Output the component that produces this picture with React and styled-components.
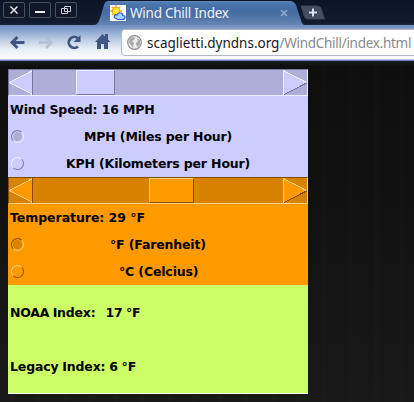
import React from "react";
import styled, { createGlobalStyle } from "styled-components";

const Global = createGlobalStyle`
  * { box-sizing: border-box; }
  body { margin: 0; background: #101010; overflow: hidden; }
`;

const Browser = styled.div`
  width: 414px;
  height: 402px;
  display: flex;
  flex-direction: column;
  overflow: hidden;
`;

const TabStrip = styled.header`
  height: 25px;
  flex: none;
  display: flex;
  background: linear-gradient(#0c1526, #101b30 23px, #1c2a44);
`;

const WindowButtons = styled.div`
  display: flex;
  gap: 4px;
  padding: 2px 0 0 3px;
  width: 95px;
`;

const WindowButton = styled.button`
  width: 22px;
  height: 16px;
  padding: 0;
  border: 1px solid #4a515e;
  border-radius: 2px;
  background: #101828;
  display: flex;
`;

const Tab = styled.div`
  width: 210px;
  height: 25px;
  display: flex;
  align-items: center;
  padding: 1px 17px 0 15px;
  clip-path: path("M0 25 C3 24 4 21 5 18 L9 5 Q10 1 14 1 L195 1 Q199 1 201 5 L206 20 Q207 25 210 25 Z");
  background: linear-gradient(#6b93c8 0, #4d77ae 3px, #456ca2 10px, #4d71a4 16px, #6685b4 25px);
`;

const TabTitle = styled.span`
  flex: 1;
  margin-left: 4px;
  font: 13.5px/20px "Noto Sans", sans-serif;
  letter-spacing: -0.25px;
  color: #eef3fa;
  white-space: nowrap;
`;

const NewTab = styled.button`
  width: 26px;
  height: 16px;
  margin: 5px 0 0 -5px;
  padding: 0;
  border: 0;
  background: none;
`;

const Toolbar = styled.nav`
  height: 36px;
  flex: none;
  display: flex;
  align-items: flex-start;
  padding-left: 8px;
  background: linear-gradient(#6d8dbd 0, #8ca7cf 6px, #bdcde3 15px, #e9eef5 24px, #fdfdfe 34px, #7484c4 35px);
`;

const ToolIcon = styled.span`
  width: 28px;
  height: 34px;
  flex: none;
  svg { display: block; }
`;

const Address = styled.div`
  flex: none;
  width: 310px;
  height: 27px;
  margin: 4px 0 0 1px;
  display: flex;
  align-items: center;
  padding-left: 5px;
  border: 1px solid #b4bac5;
  border-radius: 4px;
  background: #fff;
`;

const Url = styled.span`
  margin-left: 5px;
  font: 13.5px/24px "Noto Sans", sans-serif;
  letter-spacing: 0;
  color: #16181c;
  white-space: nowrap;
`;

const UrlPath = styled.span`
  color: #88898b;
  letter-spacing: -0.28px;
`;

const Page = styled.main`
  flex: 1;
  padding: 8px;
  background:
    linear-gradient(#171d1a, transparent 5px),
    repeating-linear-gradient(90deg, transparent 0 9px, rgba(255,255,255,.008) 12px, transparent 17px 26px),
    linear-gradient(#0d0e0d, #121212 50%, #191919);
`;

const Applet = styled.div`
  width: 300px;
  height: 325px;
  display: flex;
  flex-direction: column;
  border-bottom: 1px solid #fff;
`;

const Group = styled.section`
  height: 108px;
  background: ${(p) => p.$bg};
`;

const ScrollTrack = styled.div`
  height: 27px;
  display: flex;
  justify-content: space-between;
  background: ${(p) => p.$c.track};
  border: 1px solid ${(p) => p.$c.dark};
  border-right-color: ${(p) => p.$c.light};
  border-bottom-color: ${(p) => p.$c.light};
`;

const Arrow = styled.svg`
  display: block;
  flex: none;
`;

const Thumb = styled.div`
  width: ${(p) => p.$w}px;
  height: 25px;
  margin-left: ${(p) => p.$x}px;
  margin-right: auto;
  background: ${(p) => p.$c.bg};
  border: 1px solid ${(p) => p.$c.light};
  border-right-color: ${(p) => p.$c.dark};
  border-bottom-color: ${(p) => p.$c.dark};
`;

const Label = styled.div`
  height: ${(p) => p.$h || 27}px;
  display: flex;
  align-items: center;
  padding-left: ${(p) => p.$x || 2}px;
  font: bold 12.5px/15px "DejaVu Sans", sans-serif;
  letter-spacing: ${(p) => p.$track ?? -0.15}px;
  word-spacing: ${(p) => p.$words ?? 0}px;
  color: #000;
  white-space: pre;
`;

const Option = styled.label`
  height: 27px;
  display: flex;
  align-items: center;
  padding-left: 3px;
`;

const Radio = styled.span`
  flex: none;
  width: 13px;
  height: 13px;
  margin-right: 1px;
  padding: 1px;
  border: 1px solid;
  border-color: ${(p) =>
    p.$on
      ? `${p.$c.dark} ${p.$c.light} ${p.$c.light} ${p.$c.dark}`
      : `${p.$c.light} ${p.$c.dark} ${p.$c.dark} ${p.$c.light}`};
  border-radius: 50%;
  background: ${(p) => (p.$on ? p.$c.track : p.$c.bg)};
  background-clip: content-box;
`;

const lavender = { bg: "#ccccff", track: "#aeaed9", dark: "#77779c", light: "#eeeeff" };
const orange = { bg: "#ff9900", track: "#d98200", dark: "#804d00", light: "#ffd080" };

function ArrowButton({ c, right }) {
  return right ? (
    <Arrow width="24" height="25" shapeRendering="crispEdges">
      <path d="M1 0L23.5 12.5L1 24Z" fill={c.bg} />
      <path d="M.5 25V.5L23.5 12.5" fill="none" stroke={c.light} />
      <path d="M1 24.5L23.5 13" fill="none" stroke={c.dark} />
    </Arrow>
  ) : (
    <Arrow width="24" height="25" shapeRendering="crispEdges">
      <path d="M23 1L.5 12.5L23 24Z" fill={c.bg} />
      <path d="M23.5 .5L.5 12.5L23.5 24.5" fill="none" stroke={c.light} />
      <path d="M23.5 25V0" fill="none" stroke={c.dark} />
    </Arrow>
  );
}

function Scrollbar({ c, x, w }) {
  return (
    <ScrollTrack $c={c}>
      <ArrowButton c={c} />
      <Thumb $c={c} $x={x} $w={w} />
      <ArrowButton c={c} right />
    </ScrollTrack>
  );
}

function Choice({ c, on, x, children }) {
  return (
    <Option>
      <Radio $c={c} $on={on} />
      <Label $x={x}>{children}</Label>
    </Option>
  );
}

function WeatherIcon() {
  return (
    <svg width="16" height="16" viewBox="0 0 16 16">
      <path fill="#fff" d="M0 0h16v16H0z" />
      <path d="M6 0v12M0 6h12M2 2l8 8M10 2l-8 8" stroke="#f4a51c" strokeWidth="1.4" />
      <circle cx="6" cy="6" r="3.8" fill="#ffe535" stroke="#f5a01e" />
      <path d="M6 13.5Q3.5 13 4.5 10.8Q5 9.5 7 10Q8 7 11 8Q13 8.5 12.8 10.5Q15.5 10.5 15 13Q14 15 11 14.5H8Z" fill="#acd2ff" stroke="#245bcc" strokeWidth="1.2" />
    </svg>
  );
}

export default function App() {
  return (
    <Browser>
      <Global />
      <TabStrip>
        <WindowButtons>
          <WindowButton>
            <svg width="20" height="14"><path d="M6.5 3.5l7 7m0-7l-7 7" stroke="#e2e5e9" strokeWidth="1.5" /></svg>
          </WindowButton>
          <WindowButton>
            <svg width="20" height="14"><path d="M5 9h10" stroke="#e2e5e9" strokeWidth="2" /></svg>
          </WindowButton>
          <WindowButton>
            <svg width="20" height="14" fill="none" stroke="#c8ced7">
              <path d="M8.5 3.5h6v5h-6zM5.5 5.5h6v5h-6z" />
            </svg>
          </WindowButton>
        </WindowButtons>
        <Tab>
          <WeatherIcon />
          <TabTitle>Wind Chill Index</TabTitle>
          <svg width="8" height="8"><path d="M1 1l6 6m0-6l-6 6" stroke="#91abd0" strokeWidth="1.6" /></svg>
        </Tab>
        <NewTab>
          <svg width="26" height="16">
            <path d="M1 1H17Q20 1 21 3L24.5 14H8Q5 14 4 11Z" fill="#454f61" stroke="#384356" />
            <path d="M13 3.5v8M9 7.5h8" stroke="#17365f" strokeWidth="4" />
            <path d="M13 3.5v8M9 7.5h8" stroke="#dce3eb" strokeWidth="2.2" />
          </svg>
        </NewTab>
      </TabStrip>
      <Toolbar>
        <ToolIcon>
          <svg width="28" height="34"><path d="M9.5 12L4 17.5L9.5 23M5 17.5H16.5" fill="none" stroke="#405785" strokeWidth="3" /></svg>
        </ToolIcon>
        <ToolIcon>
          <svg width="28" height="34"><path d="M10 12L15.5 17.5L10 23M14.5 17.5H3" fill="none" stroke="#b4c1d2" strokeWidth="2.6" /></svg>
        </ToolIcon>
        <ToolIcon>
          <svg width="28" height="34">
            <path d="M14 21.5A5.5 5.5 0 1 1 13.8 13.2" fill="none" stroke="#405785" strokeWidth="2.8" />
            <path d="M16.5 10V17H9.5Z" fill="#405785" />
          </svg>
        </ToolIcon>
        <ToolIcon>
          <svg width="28" height="34">
            <path d="M3 17L10.5 9L13 11.5V9H16V14.5L18.5 17H16V24H12V19H9V24H5V17Z" fill="#405785" />
          </svg>
        </ToolIcon>
        <Address>
          <svg width="15" height="15">
            <circle cx="7.5" cy="7.5" r="6.8" fill="#ededed" stroke="#8c8c8c" strokeWidth="1.2" />
            <path d="M3 3L7 2L8 4L5 6L7 8L6 13L4 10L2 8ZM10 3L13 5L13 10L10 12L9 8L11 6Z" fill="#aaaaaa" />
          </svg>
          <Url>scaglietti.dyndns.org<UrlPath>/WindChill/index.html</UrlPath></Url>
        </Address>
      </Toolbar>
      <Page>
        <Applet>
          <Group $bg="#ccccff">
            <Scrollbar c={lavender} x={43} w={39} />
            <Label>Wind Speed: 16 MPH</Label>
            <Choice c={lavender} on x={59}>MPH (Miles per Hour)</Choice>
            <Choice c={lavender} x={41}>KPH (Kilometers per Hour)</Choice>
          </Group>
          <Group $bg="#ff9900">
            <Scrollbar c={orange} x={116} w={45} />
            <Label $track={-0.05}>Temperature: 29 °F</Label>
            <Choice c={orange} on x={85}>°F (Farenheit)</Choice>
            <Choice c={orange} x={94}>°C (Celcius)</Choice>
          </Group>
          <Group $bg="#ccff66">
            <Label $h={54} $track={-0.2} $words={-0.8}>NOAA Index:   17 °F</Label>
            <Label $h={54} $words={-0.4}>Legacy Index: 6 °F</Label>
          </Group>
        </Applet>
      </Page>
    </Browser>
  );
}
